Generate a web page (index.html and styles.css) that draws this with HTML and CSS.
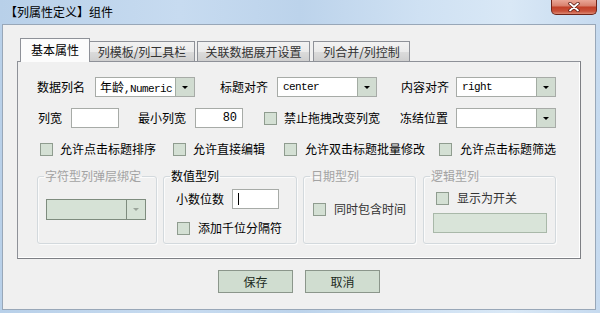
FILE: index.html
```html
<!DOCTYPE html>
<html lang="zh-CN">
<head>
  <meta charset="UTF-8">
  <title>列属性定义</title>
  <link rel="stylesheet" href="styles.css">
</head>
<body>

<div class="window">
  <div class="titlebar">
    <span class="title">【列属性定义】组件</span>
    <div class="close">
      <svg width="12" height="10" viewBox="0 0 12 10">
        <path d="M2 1.5 L10 8.5 M10 1.5 L2 8.5" stroke="#5a1a12" stroke-width="3.4" stroke-linecap="round"/>
        <path d="M2 1.5 L10 8.5 M10 1.5 L2 8.5" stroke="#ffffff" stroke-width="1.8" stroke-linecap="round"/>
      </svg>
    </div>
  </div>

  <div class="client">
    <!-- tabs -->
    <div class="tabs">
      <div class="tab active">基本属性</div>
      <div class="tab t2">列模板/列工具栏</div>
      <div class="tab t3">关联数据展开设置</div>
      <div class="tab t4">列合并/列控制</div>
    </div>

    <div class="panel">
      <div class="row row1">
        <span class="label">数据列名</span>
        <div class="combo c1"><span class="val">年龄<span class="mono">,Numeric</span></span><span class="drop"></span></div>
        <span class="label l2">标题对齐</span>
        <div class="combo c2"><span class="val mono">center</span><span class="drop"></span></div>
        <span class="label l3">内容对齐</span>
        <div class="combo c3"><span class="val mono">right</span><span class="drop"></span></div>
      </div>

      <div class="row row2">
        <span class="label w-short">列宽</span>
        <div class="input i1"></div>
        <span class="label l-min">最小列宽</span>
        <div class="input i2 mono">80</div>
        <label class="check ch-drag"><span class="box"></span>禁止拖拽改变列宽</label>
        <span class="label l-freeze">冻结位置</span>
        <div class="combo c4"><span class="val"></span><span class="drop"></span></div>
      </div>

      <div class="row row3">
        <label class="check k1"><span class="box"></span>允许点击标题排序</label>
        <label class="check k2"><span class="box"></span>允许直接编辑</label>
        <label class="check k3"><span class="box"></span>允许双击标题批量修改</label>
        <label class="check k4"><span class="box"></span>允许点击标题筛选</label>
      </div>

      <div class="groups">
        <fieldset class="group g1 disabled">
          <legend>字符型列弹层绑定</legend>
          <div class="combo off"><span class="val"></span><span class="drop"></span></div>
        </fieldset>

        <fieldset class="group g2">
          <legend>数值型列</legend>
          <div class="row digits">
            <span class="label">小数位数</span>
            <div class="input i3"><span class="caret"></span></div>
          </div>
          <label class="check sep"><span class="box"></span>添加千位分隔符</label>
        </fieldset>

        <fieldset class="group g3 disabled">
          <legend>日期型列</legend>
          <label class="check withtime"><span class="box"></span>同时包含时间</label>
        </fieldset>

        <fieldset class="group g4 disabled">
          <legend>逻辑型列</legend>
          <label class="check switch"><span class="box"></span>显示为开关</label>
          <div class="flat"></div>
        </fieldset>
      </div>
    </div>

    <div class="actions">
      <button class="btn">保存</button>
      <button class="btn">取消</button>
    </div>
  </div>
</div>

</body>
</html>
```

FILE: styles.css
```css
* {
  box-sizing: border-box;
}
body {
  margin: 0;
  font-family: "Noto Sans CJK SC", sans-serif;
  font-size: 12px;
  line-height: 14px;
  color: #000;
}
.mono {
  font-family: "Liberation Mono", "Noto Sans CJK SC", monospace;
  font-size: 11px;
  letter-spacing: -0.6px;
}

/* window frame */
.window {
  width: 600px;
  height: 313px;
  display: flex;
  flex-direction: column;
  overflow: hidden;
  background: linear-gradient(to right, #b8d0e9, #c7dbf0 30%, #bcd3eb 50%, #cfe1f3 70%, #d9e8f6 85%, #c6daef);
}
.titlebar {
  height: 24px;
  flex: none;
  display: flex;
  align-items: center;
  padding-left: 5px;
}
.title {
  color: #000;
}
.close {
  margin-left: auto;
  margin-right: 3px;
  align-self: flex-start;
  width: 46px;
  height: 15px;
  display: flex;
  align-items: center;
  justify-content: center;
  border: 1px solid #6e2419;
  border-top: none;
  border-radius: 0 0 5px 5px;
  background: linear-gradient(#eaa797, #d9826f 40%, #c24129 52%, #c9523b 80%, #dc8a74);
}
.client {
  flex: 1;
  margin: 0 4px 3px 2px;
  border: 1px solid #98a7b8;
  background: #f0f0f0;
  padding: 13px 14px 0;
}

/* tabs */
.tabs {
  display: flex;
  align-items: flex-end;
  height: 23px;
}
.tab {
  height: 20px;
  border: 1px solid #8e9198;
  border-bottom: none;
  background: linear-gradient(#f2f2f2, #ebebeb 50%, #dcdcdc 51%, #cfcfcf);
  color: #333;
  text-align: center;
  line-height: 19px;
}
.tab.active {
  width: 70px;
  height: 24px;
  margin-left: 3px;
  margin-bottom: -1px;
  position: relative;
  z-index: 1;
  background: #fcfcfc;
  color: #000;
  line-height: 21px;
}
.t2 { width: 105px; border-left: none; }
.t3 { width: 113px; margin-left: 2px; }
.t4 { width: 97px; margin-left: 3px; }

.panel {
  height: 198px;
  border: 1px solid #8e9198;
  border-right-color: #7d7f84;
  border-bottom-color: #7d7f84;
  box-shadow: inset -1px -1px #ffffff;
  background: #f0f0f0;
  padding: 15px 0 0 19px;
}

/* rows */
.row {
  display: flex;
  align-items: center;
}
.row1, .row2 {
  height: 20px;
}
.row2 {
  margin-top: 11px;
}
.row3 {
  height: 16px;
  margin-top: 13px;
}
.label {
  white-space: nowrap;
}

.combo {
  display: flex;
  height: 20px;
  width: 100px;
  border: 1px solid #a7aba7;
  background: #fff;
}
.combo .val {
  flex: 1;
  padding-left: 4px;
  line-height: 18px;
  white-space: nowrap;
  overflow: hidden;
}
.combo .val.mono {
  padding-left: 5px;
}
.combo .drop {
  width: 19px;
  border-left: 1px solid #a3aca3;
  background: #d1dcd1;
  display: flex;
  align-items: center;
  justify-content: center;
}
.combo .drop::after {
  content: "";
  border-left: 3px solid transparent;
  border-right: 3px solid transparent;
  border-top: 3px solid #000;
}
.c1 { margin-left: 10px; }
.l2 { margin-left: 25px; }
.c2 { margin-left: 9px; }
.l3 { margin-left: 24px; }
.c3 { margin-left: 7px; }

.input {
  height: 20px;
  width: 48px;
  border: 1px solid #a7aba7;
  background: #fff;
  line-height: 18px;
}
.w-short { margin-left: 1px; }
.i1 { margin-left: 9px; }
.l-min { margin-left: 19px; }
.i2 {
  margin-left: 9px;
  text-align: right;
  padding-right: 5px;
  font-size: 12px;
  letter-spacing: 0;
}
.ch-drag { margin-left: 21px; }
.l-freeze { margin-left: 20px; }
.c4 { margin-left: 8px; }

/* checkboxes */
.check {
  display: flex;
  align-items: center;
  gap: 7px;
  white-space: nowrap;
}
.check .box {
  width: 13px;
  height: 13px;
  border: 1px solid #8f9c8f;
  background: #d4e0d4;
  flex: none;
}
.k1 { margin-left: 3px; }
.k2 { margin-left: 17px; }
.k3 { margin-left: 19px; gap: 8px; }
.k4 { margin-left: 14px; gap: 8px; }

/* group boxes */
.groups {
  display: flex;
  gap: 6px;
  margin-top: 12px;
}
.group {
  margin: 0;
  padding: 0;
  min-width: 0;
  height: 75px;
  border: 1px solid #d3d9dd;
  border-radius: 3px;
  box-shadow: inset 1px 1px #fbfbfb, 1px 1px #fbfbfb;
}
.group legend {
  margin-left: 6px;
  padding: 0 1px;
  line-height: 14px;
}
.group.disabled legend {
  color: #a3a3a3;
}
.g1 { width: 120px; }
.g2 { width: 134px; }
.g3 { width: 113px; }
.g4 { width: 133px; margin-left: 1px; }

.combo.off {
  margin: 16px 0 0 8px;
  height: 21px;
  border-color: #7e8c7e;
  background: #d6e2d6;
}
.combo.off .drop {
  border-left-color: #7e8c7e;
  background: #d6e2d6;
}
.combo.off .drop::after {
  border-top-color: #9aa49a;
}

.digits {
  height: 20px;
  margin-top: 6px;
  padding-left: 12px;
}
.i3 {
  width: 47px;
  margin-left: 8px;
  padding-left: 5px;
  display: flex;
  align-items: center;
}
.caret {
  width: 1px;
  height: 12px;
  background: #000;
}
.sep {
  height: 16px;
  margin: 11px 0 0 13px;
  gap: 8px;
}
.withtime {
  height: 16px;
  margin: 18px 0 0 9px;
  gap: 8px;
  color: #333;
}
.switch {
  height: 16px;
  margin: 7px 0 0 12px;
  gap: 8px;
  color: #333;
}
.flat {
  width: 114px;
  height: 20px;
  margin: 7px 0 0 9px;
  border: 1px solid #a9b8a9;
  background: #d9e4d9;
}

/* buttons */
.actions {
  display: flex;
  justify-content: center;
  gap: 12px;
  margin-top: 11px;
}
.btn {
  width: 75px;
  height: 23px;
  padding: 0;
  font-family: inherit;
  font-size: 12px;
  color: #1c2a1c;
  background: #d0ddd0;
  border: 1px solid #8b968b;
  border-radius: 0;
}
```
